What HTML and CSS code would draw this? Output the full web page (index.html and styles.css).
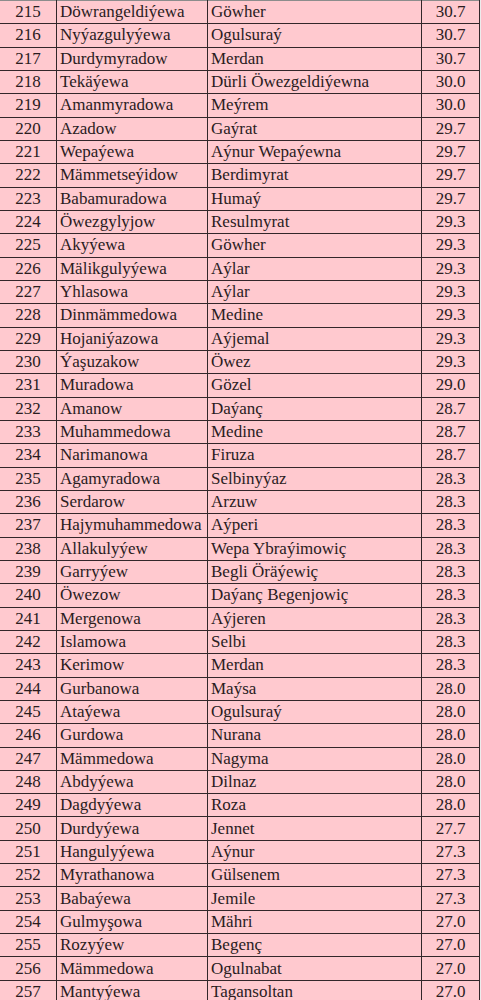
FILE: index.html
```html
<!DOCTYPE html>
<html>
<head>
<meta charset="utf-8">
<link rel="stylesheet" href="styles.css">
</head>
<body>
<table class="grid">
<colgroup><col class="c-num"><col class="c-sur"><col class="c-name"><col class="c-score"></colgroup>
<tbody>
<tr><td class="num">215</td><td>Döwrangeldiýewa</td><td>Göwher</td><td class="num">30.7</td></tr>
<tr><td class="num">216</td><td>Nyýazgulyýewa</td><td>Ogulsuraý</td><td class="num">30.7</td></tr>
<tr><td class="num">217</td><td>Durdymyradow</td><td>Merdan</td><td class="num">30.7</td></tr>
<tr><td class="num">218</td><td>Tekäýewa</td><td>Dürli Öwezgeldiýewna</td><td class="num">30.0</td></tr>
<tr><td class="num">219</td><td>Amanmyradowa</td><td>Meýrem</td><td class="num">30.0</td></tr>
<tr><td class="num">220</td><td>Azadow</td><td>Gaýrat</td><td class="num">29.7</td></tr>
<tr><td class="num">221</td><td>Wepaýewa</td><td>Aýnur Wepaýewna</td><td class="num">29.7</td></tr>
<tr><td class="num">222</td><td>Mämmetseýidow</td><td>Berdimyrat</td><td class="num">29.7</td></tr>
<tr><td class="num">223</td><td>Babamuradowa</td><td>Humaý</td><td class="num">29.7</td></tr>
<tr><td class="num">224</td><td>Öwezgylyjow</td><td>Resulmyrat</td><td class="num">29.3</td></tr>
<tr><td class="num">225</td><td>Akyýewa</td><td>Göwher</td><td class="num">29.3</td></tr>
<tr><td class="num">226</td><td>Mälikgulyýewa</td><td>Aýlar</td><td class="num">29.3</td></tr>
<tr><td class="num">227</td><td>Yhlasowa</td><td>Aýlar</td><td class="num">29.3</td></tr>
<tr><td class="num">228</td><td>Dinmämmedowa</td><td>Medine</td><td class="num">29.3</td></tr>
<tr><td class="num">229</td><td>Hojaniýazowa</td><td>Aýjemal</td><td class="num">29.3</td></tr>
<tr><td class="num">230</td><td>Ýaşuzakow</td><td>Öwez</td><td class="num">29.3</td></tr>
<tr><td class="num">231</td><td>Muradowa</td><td>Gözel</td><td class="num">29.0</td></tr>
<tr><td class="num">232</td><td>Amanow</td><td>Daýanç</td><td class="num">28.7</td></tr>
<tr><td class="num">233</td><td>Muhammedowa</td><td>Medine</td><td class="num">28.7</td></tr>
<tr><td class="num">234</td><td>Narimanowa</td><td>Firuza</td><td class="num">28.7</td></tr>
<tr><td class="num">235</td><td>Agamyradowa</td><td>Selbinyýaz</td><td class="num">28.3</td></tr>
<tr><td class="num">236</td><td>Serdarow</td><td>Arzuw</td><td class="num">28.3</td></tr>
<tr><td class="num">237</td><td>Hajymuhammedowa</td><td>Aýperi</td><td class="num">28.3</td></tr>
<tr><td class="num">238</td><td>Allakulyýew</td><td>Wepa Ybraýimowiç</td><td class="num">28.3</td></tr>
<tr><td class="num">239</td><td>Garryýew</td><td>Begli Öräýewiç</td><td class="num">28.3</td></tr>
<tr><td class="num">240</td><td>Öwezow</td><td>Daýanç Begenjowiç</td><td class="num">28.3</td></tr>
<tr><td class="num">241</td><td>Mergenowa</td><td>Aýjeren</td><td class="num">28.3</td></tr>
<tr><td class="num">242</td><td>Islamowa</td><td>Selbi</td><td class="num">28.3</td></tr>
<tr><td class="num">243</td><td>Kerimow</td><td>Merdan</td><td class="num">28.3</td></tr>
<tr><td class="num">244</td><td>Gurbanowa</td><td>Maýsa</td><td class="num">28.0</td></tr>
<tr><td class="num">245</td><td>Ataýewa</td><td>Ogulsuraý</td><td class="num">28.0</td></tr>
<tr><td class="num">246</td><td>Gurdowa</td><td>Nurana</td><td class="num">28.0</td></tr>
<tr><td class="num">247</td><td>Mämmedowa</td><td>Nagyma</td><td class="num">28.0</td></tr>
<tr><td class="num">248</td><td>Abdyýewa</td><td>Dilnaz</td><td class="num">28.0</td></tr>
<tr><td class="num">249</td><td>Dagdyýewa</td><td>Roza</td><td class="num">28.0</td></tr>
<tr><td class="num">250</td><td>Durdyýewa</td><td>Jennet</td><td class="num">27.7</td></tr>
<tr><td class="num">251</td><td>Hangulyýewa</td><td>Aýnur</td><td class="num">27.3</td></tr>
<tr><td class="num">252</td><td>Myrathanowa</td><td>Gülsenem</td><td class="num">27.3</td></tr>
<tr><td class="num">253</td><td>Babaýewa</td><td>Jemile</td><td class="num">27.3</td></tr>
<tr><td class="num">254</td><td>Gulmyşowa</td><td>Mähri</td><td class="num">27.0</td></tr>
<tr><td class="num">255</td><td>Rozyýew</td><td>Begenç</td><td class="num">27.0</td></tr>
<tr><td class="num">256</td><td>Mämmedowa</td><td>Ogulnabat</td><td class="num">27.0</td></tr>
<tr><td class="num">257</td><td>Mantyýewa</td><td>Tagansoltan</td><td class="num">27.0</td></tr>
</tbody>
</table>
</body>
</html>
```
FILE: styles.css
```css
html, body {
  margin: 0;
  padding: 0;
  background: #ececec;
}
body {
  overflow: hidden;
  font-family: "Liberation Serif", "Times New Roman", serif;
  font-size: 17px;
  color: #2a1c1e;
}
.grid {
  border-collapse: collapse;
  table-layout: fixed;
  width: 480px;
  margin-left: -1px;
  background: #ffc9cf;
}
.c-num { width: 57px; }
.c-sur { width: 151px; }
.c-name { width: 214px; }
.c-score { width: 58px; }
.grid td {
  border: 1px solid #33262a;
  height: 23.333px;
  padding: 0 3px;
  box-sizing: border-box;
  white-space: nowrap;
  overflow: hidden;
  line-height: 20px;
  vertical-align: middle;
}
.grid tr:first-child td {
  border-top-color: #8c8c8c;
}
.grid td.num {
  text-align: center;
}
```
